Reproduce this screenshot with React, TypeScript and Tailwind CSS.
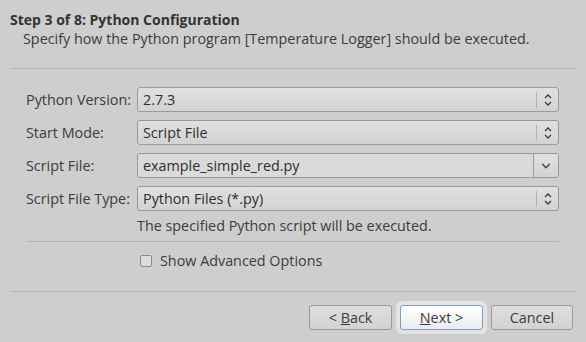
import { ChevronDown } from 'lucide-react';

const font = { fontFamily: '"Open Sans", "DejaVu Sans", sans-serif' };

const UpDown = () => (
	<svg width="10" height="14" viewBox="0 0 10 14" className="text-[#3c3c3c]">
		<path d="M2 5 L5 2 L8 5" fill="none" stroke="currentColor" strokeWidth="1.3" />
		<path d="M2 9 L5 12 L8 9" fill="none" stroke="currentColor" strokeWidth="1.3" />
	</svg>
);

const Combo = ({ value }: { value: string }) => (
	<div className="flex h-[25px] items-center rounded-[3px] border border-[#9a9a9a] bg-gradient-to-b from-[#e0e0e0] to-[#d3d3d3] pl-[5px]">
		<span className="flex-1 text-[#2e2e2e]">{value}</span>
		<div className="flex h-full w-[27px] items-center justify-center">
			<div className="mr-[6px] h-[16px] w-px bg-[#b0b0b0]" />
			<UpDown />
		</div>
	</div>
);

const EditCombo = ({ value }: { value: string }) => (
	<div className="flex h-[25px] items-center rounded-[3px] border border-[#9a9a9a] bg-[#dadada]">
		<span className="flex-1 pl-[5px] text-[#2e2e2e]">{value}</span>
		<div className="flex h-full w-[25px] items-center justify-center rounded-r-[3px] border-l border-[#9a9a9a] bg-gradient-to-b from-[#e0e0e0] to-[#d3d3d3]">
			<ChevronDown size={14} strokeWidth={2.2} className="text-[#3c3c3c]" />
		</div>
	</div>
);

const rows: { label: string; value: string; edit?: boolean }[] = [
	{ label: 'Python Version:', value: '2.7.3' },
	{ label: 'Start Mode:', value: 'Script File' },
	{ label: 'Script File:', value: 'example_simple_red.py', edit: true },
	{ label: 'Script File Type:', value: 'Python Files (*.py)' },
];

export default function App() {
	return (
		<div className="h-[342px] w-[586px] bg-[#cecece] text-[14.35px] text-[#3c3c3c]" style={font}>
			<div className="px-[10px] pt-[10px]">
				<div className="text-[14px] font-bold leading-[19px] text-[#333]">Step 3 of 8: Python Configuration</div>
				<div className="pl-[13px] leading-[19px]">
					Specify how the Python program [Temperature Logger] should be executed.
				</div>
			</div>
			<div className="mx-[10px] mt-[20px] h-px bg-[#b5b5b5]" />

			<div className="px-[26px] pt-[18px] pr-[27px]">
				<div className="grid grid-cols-[111px_1fr] gap-y-[8px]">
					{rows.map((r) => (
						<div key={r.label} className="contents">
							<div className="flex items-center">{r.label}</div>
							{r.edit ? <EditCombo value={r.value} /> : <Combo value={r.value} />}
						</div>
					))}
				</div>
				<div className="mt-[5px] pl-[111px] leading-[19px]">The specified Python script will be executed.</div>
				<div className="mt-[6px] h-px bg-[#b5b5b5]" />
				<div className="mt-[9px] flex items-center pl-[114px]">
					<div className="h-[12px] w-[12px] rounded-[2px] border border-[#8a8a8a] bg-[#dcdcdc]" />
					<span className="ml-[8px] leading-[19px]">Show Advanced Options</span>
				</div>
			</div>

			<div className="mx-[10px] mt-[21px] h-px bg-[#b5b5b5]" />

			<div className="flex justify-end px-[13px] pt-[13px]">
				<button className="h-[25px] w-[83px] rounded-[3px] border border-[#9a9a9a] bg-gradient-to-b from-[#dedede] to-[#d2d2d2] text-[#3c3c3c]">
					&lt; <span className="underline">B</span>ack
				</button>
				<div className="mx-[4px] -my-[4px] rounded-[6px] bg-[#e4e4e4] p-[4px]">
					<button className="h-[25px] w-[83px] rounded-[3px] border border-[#7a9cc8] bg-gradient-to-b from-[#ffffff] to-[#ececec] text-[#3c3c3c]">
						<span className="underline">N</span>ext &gt;
					</button>
				</div>
				<button className="h-[25px] w-[82px] rounded-[3px] border border-[#9a9a9a] bg-gradient-to-b from-[#dedede] to-[#d2d2d2] text-[#3c3c3c]">
					Cancel
				</button>
			</div>
		</div>
	);
}
